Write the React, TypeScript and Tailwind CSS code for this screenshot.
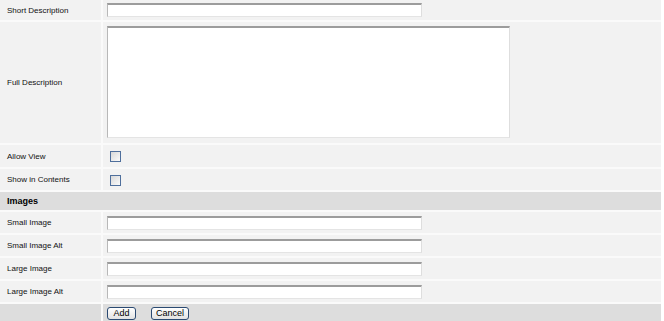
import React from 'react';

const font = { fontFamily: '"Liberation Sans", Arial, sans-serif' };

function Row({ label, height, children }: { label: string; height: string; children?: React.ReactNode }) {
    return (
        <div className={`flex gap-[2px] ${height}`}>
            <div className="w-[101px] shrink-0 bg-[#f2f2f2] flex items-center pl-[7px] pt-[1px] text-[8px] text-[#111]">{label}</div>
            <div className="flex-1 bg-[#f2f2f2] flex items-center pl-[4px]">{children}</div>
        </div>
    );
}

const TextBox = () => (
    <div className="w-[315px] h-[14px] bg-white border border-t-2 border-t-[#9c9c9c] border-l-[#b8b8b8] border-r-[#dedede] border-b-[#e4e4e4]" />
);

const CheckBox = () => (
    <div className="ml-[3px] mt-[1px] w-[11px] h-[11px] border border-[#4f6f9c] bg-gradient-to-br from-[#d8d8d8] to-[#fbfbfb]" />
);

const Button = ({ label, width }: { label: string; width: string }) => (
    <button className={`${width} h-[13px] rounded-[3px] border border-[#2b4a72] bg-gradient-to-b from-white to-[#e2e2e2] text-[9px] leading-none text-black flex items-center justify-center`}>
        {label}
    </button>
);

export default function App() {
    return (
        <div className="w-[664px] h-[321px] bg-white overflow-hidden" style={font}>
            <div className="w-[661px] bg-[#fafafa] flex flex-col gap-[2px]">
                <Row label="Short Description" height="h-[20px]">
                    <TextBox />
                </Row>
                <div className="flex gap-[2px] h-[121px]">
                    <div className="w-[101px] shrink-0 bg-[#f2f2f2] flex items-center pl-[7px] pt-[1px] text-[8px] text-[#111]">Full Description</div>
                    <div className="flex-1 bg-[#f2f2f2] pl-[4px] pt-[4px]">
                        <div className="w-[403px] h-[112px] bg-white border border-t-2 border-t-[#9c9c9c] border-l-[#b8b8b8] border-r-[#dedede] border-b-[#e4e4e4]" />
                    </div>
                </div>
                <Row label="Allow View" height="h-[22px]">
                    <CheckBox />
                </Row>
                <Row label="Show in Contents" height="h-[21px]">
                    <CheckBox />
                </Row>
                <div className="h-[18px] bg-[#dddddd] flex items-center pl-[7px] pt-[1px] text-[9px] font-bold text-black">Images</div>
                <Row label="Small Image" height="h-[21px]">
                    <TextBox />
                </Row>
                <Row label="Small Image Alt" height="h-[21px]">
                    <TextBox />
                </Row>
                <Row label="Large Image" height="h-[21px]">
                    <TextBox />
                </Row>
                <Row label="Large Image Alt" height="h-[21px]">
                    <TextBox />
                </Row>
                <div className="flex gap-[2px] h-[22px]">
                    <div className="w-[101px] shrink-0 bg-[#dddddd]" />
                    <div className="flex-1 bg-[#dddddd] flex items-start pt-[3px] pl-[4px] gap-[15px]">
                        <Button label="Add" width="w-[29px]" />
                        <Button label="Cancel" width="w-[38px]" />
                    </div>
                </div>
            </div>
        </div>
    );
}
